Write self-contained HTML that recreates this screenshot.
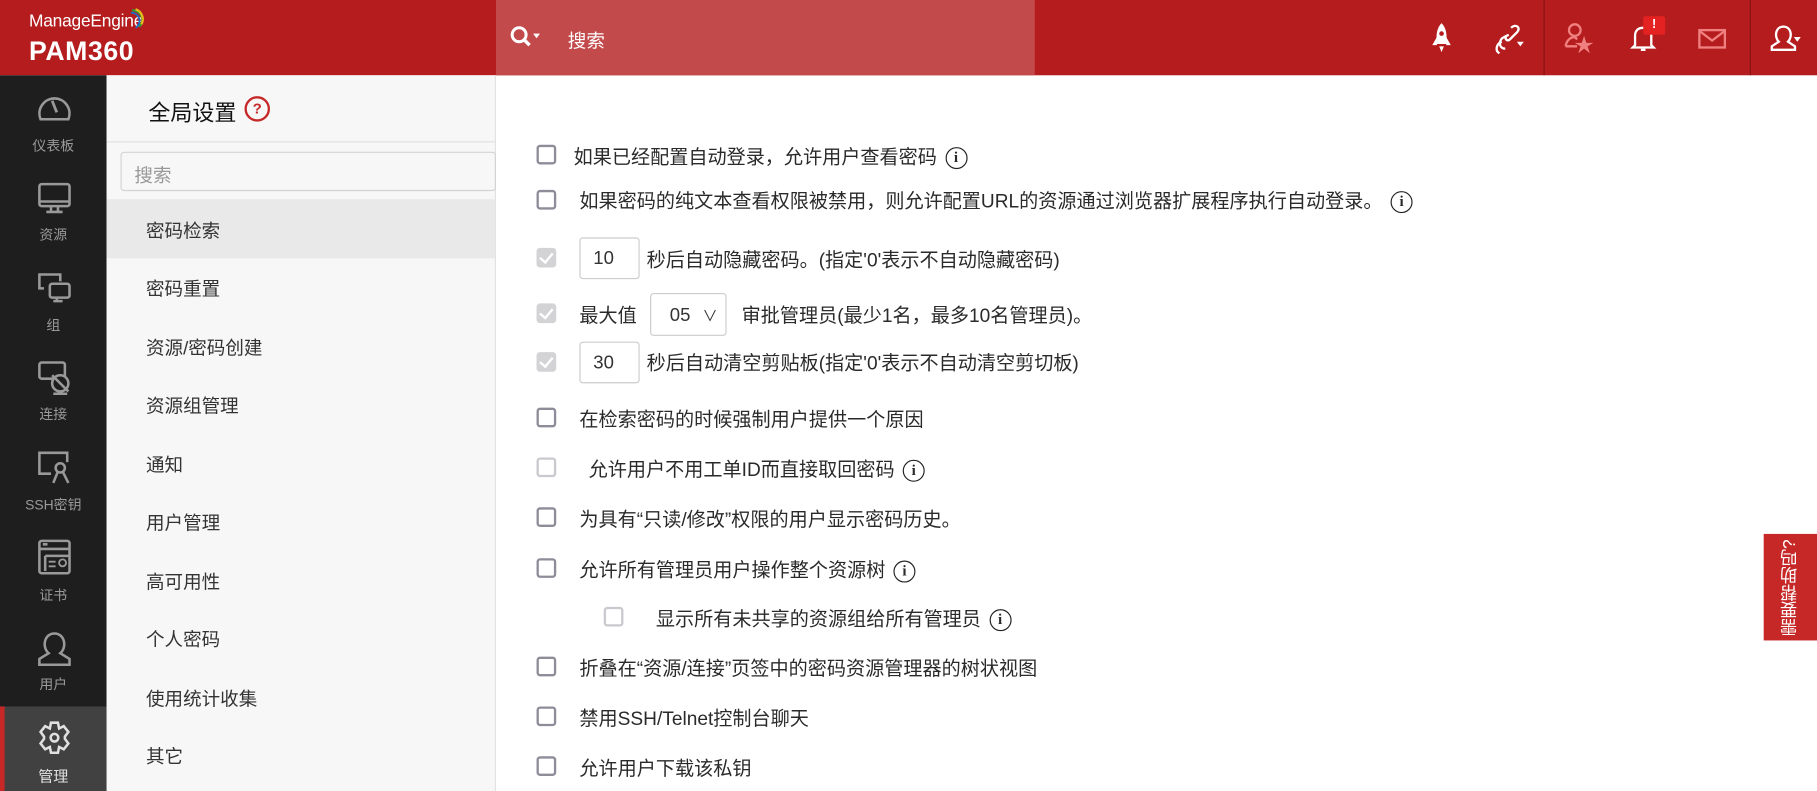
<!DOCTYPE html>
<html><head><meta charset="utf-8"><style>
*{margin:0;padding:0;box-sizing:border-box}
html,body{width:1817px;height:791px;overflow:hidden;background:#fff}
body{font-family:"Liberation Sans","Noto Sans CJK SC",sans-serif}
#w{position:absolute;left:0;top:0;width:1568px;height:683px;transform:scale(1.15880,1.15813);transform-origin:0 0}
.a{position:absolute}
.hdr{left:0;top:0;width:1568px;height:65px;background:#b41c1e}
.srch{left:428px;top:0;width:465px;height:65px;background:#c34a4b}
.sb{left:0;top:65px;width:92px;height:618px;background:#1e1e1e}
.si{position:absolute;left:0;width:92px;text-align:center;color:#9a9a9a;font-size:12px}
.p2{left:92px;top:65px;width:336px;height:618px;background:#f7f7f7;border-right:1px solid #e2e2e2}
.mi{position:absolute;left:34px;font-size:16px;color:#333}
.cb{position:absolute;left:463px;width:17px;height:17px;border:2px solid #8e8c99;border-radius:3px;background:#fff}
.cb.d{border-color:#c9c9cf}
.cb.c{border:none;background:#d3d3d6}
.cb.c:after{content:"";position:absolute;left:5px;top:2px;width:5px;height:9px;border:solid #fff;border-width:0 2px 2px 0;transform:rotate(40deg)}
.t{position:absolute;font-size:16.5px;color:#2a2a2a;white-space:nowrap}
.inp{position:absolute;left:500px;width:52px;height:36px;border:1px solid #ccc;border-radius:3px;font-size:16px;color:#333;padding:9px 0 0 11px;background:#fff}
.info{display:inline-block;width:19px;height:19px;border:1.6px solid #222;border-radius:50%;font-size:13px;font-weight:bold;text-align:center;line-height:16px;vertical-align:1px;margin-left:7px;font-family:"Liberation Serif",serif}
</style></head><body><div id="w">
<div class="a hdr"></div>
<div class="a" style="left:25px;top:10px;color:#fff;font-size:15px;letter-spacing:-0.2px">ManageEngine</div>
<svg class="a" style="left:112px;top:7px" width="14" height="18"><path d="M2 2 A8 8 0 0 1 8 16" stroke="#2a9d3a" stroke-width="2" fill="none"/><path d="M5 1 A9 9 0 0 1 10 14" stroke="#e8b81a" stroke-width="2" fill="none"/><path d="M1 4 A7 7 0 0 1 5 17" stroke="#1d6ec9" stroke-width="1.5" fill="none"/></svg>
<div class="a" style="left:25px;top:31px;color:#fff;font-size:23px;font-weight:bold;letter-spacing:0.5px">PAM360</div>
<div class="a srch"></div>
<svg class="a" style="left:440px;top:22px" width="28" height="22"><circle cx="8" cy="8" r="6" stroke="#fff" stroke-width="2.6" fill="none"/><path d="M12 12 L17 17" stroke="#fff" stroke-width="3"/><path d="M20 7 L26 7 L23 11Z" fill="#fff"/></svg>
<div class="a" style="left:490px;top:22px;color:#fff;font-size:16px">搜索</div>
<svg class="a" style="left:1234px;top:18px" width="20" height="30"><path d="M10 2 C14 6 15 12 14 20 L6 20 C5 12 6 6 10 2Z" fill="#fff"/><path d="M6 14 L2 21 L6 21Z M14 14 L18 21 L14 21Z" fill="#fff"/><circle cx="10" cy="11" r="2" fill="#b41c1e"/><path d="M8 22 L12 22 L10 27Z" fill="#fff"/></svg>
<svg class="a" style="left:1288px;top:18px" width="30" height="30"><path d="M11 24 C5 24 5 16 10 14 L14 12 M16 6 C20 2 25 6 21 10 L15 16 C13 18 10 16 12 13" stroke="#fff" stroke-width="2" fill="none"/><path d="M6 28 C2 26 3 20 8 18" stroke="#fff" stroke-width="2" fill="none"/><path d="M21 18 L27 18 L24 22Z" fill="#fff"/></svg>
<div class="a" style="left:1332px;top:0;width:1px;height:65px;background:#8a1214"></div>
<svg class="a" style="left:1348px;top:18px" width="30" height="30"><circle cx="11" cy="8" r="5" stroke="#f08080" stroke-width="2" fill="none"/><path d="M3 22 C4 16 8 14 11 14 L13 16" stroke="#f08080" stroke-width="2" fill="none"/><path d="M3 22 L13 22" stroke="#f08080" stroke-width="2"/><path d="M19 13 L21 19 L27 19 L22 22 L24 28 L19 24 L14 28 L16 22 L11 19 L17 19Z" fill="#f08080"/></svg>
<svg class="a" style="left:1406px;top:18px" width="26" height="30"><path d="M5 21 L5 13 C5 8 8 6 12 6 C16 6 19 8 19 13 L19 21 L21 23 L3 23Z" stroke="#fff" stroke-width="2" fill="none"/><path d="M10 25 L14 25" stroke="#fff" stroke-width="2"/></svg>
<div class="a" style="left:1418px;top:14px;width:19px;height:16px;background:#e52222;border-radius:2px;color:#fff;font-size:11px;font-weight:bold;text-align:center;line-height:14px">!</div>
<svg class="a" style="left:1465px;top:24px" width="26" height="20"><rect x="1.5" y="2" width="22" height="15" stroke="#f08080" stroke-width="2" fill="none"/><path d="M2 3 L12.5 11 L23 3" stroke="#f08080" stroke-width="2" fill="none"/></svg>
<div class="a" style="left:1510px;top:0;width:1px;height:65px;background:#8a1214"></div>
<svg class="a" style="left:1527px;top:20px" width="30" height="28"><path d="M8 16 C4 12 5 3 12 3 C19 3 20 12 16 16 L22 20 L22 23 L2 23 L2 20Z" stroke="#fff" stroke-width="2" fill="none"/><path d="M21 12 L27 12 L24 16Z" fill="#fff"/></svg>
<div class="a sb"></div>
<div class="a" style="left:0;top:610px;width:92px;height:73px;background:#414141"></div>
<div class="a" style="left:0;top:610px;width:4px;height:73px;background:#c62828"></div>
<svg class="a" style="left:32px;top:80px" width="30" height="26"><path d="M3 23 A13 13 0 1 1 27 23Z" stroke="#999" stroke-width="2.2" fill="none"/><path d="M13 7 L17 17" stroke="#999" stroke-width="2.4"/></svg>
<div class="si" style="top:117px">仪表板</div>
<svg class="a" style="left:32px;top:157px" width="30" height="30"><rect x="2" y="2" width="26" height="19" rx="2" stroke="#999" stroke-width="2.2" fill="none"/><path d="M2 17 L28 17 M12 21 L12 25 M18 21 L18 25 M8 26 L22 26" stroke="#999" stroke-width="2.2"/></svg>
<div class="si" style="top:194px">资源</div>
<svg class="a" style="left:32px;top:235px" width="30" height="30"><path d="M6 14 L2 14 L2 2 L20 2 L20 8" stroke="#999" stroke-width="2.2" fill="none"/><rect x="11" y="10" width="17" height="12" rx="2" stroke="#999" stroke-width="2.2" fill="none"/><path d="M17 22 L17 25 M22 25 L14 25" stroke="#999" stroke-width="2.2"/></svg>
<div class="si" style="top:272px">组</div>
<svg class="a" style="left:32px;top:311px" width="30" height="32"><rect x="2" y="2" width="22" height="14" rx="2" stroke="#999" stroke-width="2.2" fill="none"/><circle cx="20" cy="20" r="7" stroke="#999" stroke-width="2.2" fill="#1e1e1e"/><path d="M13 13 L27 27 M14 29 L26 29" stroke="#999" stroke-width="2.2"/></svg>
<div class="si" style="top:349px">连接</div>
<svg class="a" style="left:32px;top:389px" width="30" height="32"><path d="M12 20 L2 20 L2 2 L26 2 L26 10" stroke="#999" stroke-width="2.2" fill="none"/><circle cx="20" cy="15" r="4" stroke="#999" stroke-width="2.2" fill="none"/><path d="M18 18 L14 28 M22 18 L27 28" stroke="#999" stroke-width="2.2"/></svg>
<div class="si" style="top:427px">SSH密钥</div>
<svg class="a" style="left:32px;top:465px" width="30" height="34"><rect x="2" y="2" width="26" height="28" rx="2" stroke="#999" stroke-width="2.2" fill="none"/><path d="M2 9 L28 9 M5 5 L9 5 M7 15 L28 15 M7 15 L7 28" stroke="#999" stroke-width="2.2"/><path d="M10 20 L16 20 M10 24 L16 24" stroke="#999" stroke-width="1.6"/><circle cx="22" cy="21" r="3" stroke="#999" stroke-width="1.6" fill="none"/></svg>
<div class="si" style="top:505px">证书</div>
<svg class="a" style="left:32px;top:545px" width="30" height="32"><path d="M10 19 C4 14 6 2 15 2 C24 2 26 14 20 19 L28 24 L28 29 L2 29 L2 24Z" stroke="#999" stroke-width="2.2" fill="none"/></svg>
<div class="si" style="top:582px">用户</div>
<svg class="a" style="left:33px;top:622px" width="28" height="30"><g transform="translate(14,15)" stroke="#e0e0e0" stroke-width="2.2" fill="none"><circle r="3.3"/><path d="M-3 -13 L3 -13 L4 -8 L8 -10 L12 -5 L9 -1 L9 1 L12 5 L8 10 L4 8 L3 13 L-3 13 L-4 8 L-8 10 L-12 5 L-9 1 L-9 -1 L-12 -5 L-8 -10 L-4 -8Z"/></g></svg>
<div class="si" style="top:660px;color:#e0e0e0;font-size:13px">管理</div>
<div class="a p2"></div>
<div class="a" style="left:128px;top:83px;font-size:19px;color:#111">全局设置</div>
<div class="a" style="left:211px;top:83px;width:22px;height:22px;border:2px solid #c62828;border-radius:50%;color:#c62828;font-size:13px;font-weight:bold;text-align:center;line-height:18px">?</div>
<div class="a" style="left:92px;top:122px;width:336px;height:1px;background:#e0e0e0"></div>
<div class="a" style="left:104px;top:131px;width:324px;height:34px;border:1px solid #d3d3d3;border-radius:3px;background:#f7f7f7;color:#999;font-size:16px;padding:6px 0 0 11px">搜索</div>
<div class="a" style="left:92px;top:172px;width:335px;height:51px;background:#e9e9e9"></div>
<div class="a" style="left:92px;top:0;width:336px;height:683px">
<div class="mi" style="top:186px">密码检索</div>
<div class="mi" style="top:236px">密码重置</div>
<div class="mi" style="top:287px">资源/密码创建</div>
<div class="mi" style="top:337px">资源组管理</div>
<div class="mi" style="top:388px">通知</div>
<div class="mi" style="top:438px">用户管理</div>
<div class="mi" style="top:489px">高可用性</div>
<div class="mi" style="top:539px">个人密码</div>
<div class="mi" style="top:590px">使用统计收集</div>
<div class="mi" style="top:640px">其它</div>
</div>
<div class="cb" style="top:125px"></div><div class="t" style="left:495px;top:122px">如果已经配置自动登录，允许用户查看密码<span class="info">i</span></div>
<div class="cb" style="top:164px"></div><div class="t" style="left:500px;top:160px">如果密码的纯文本查看权限被禁用，则允许配置URL的资源通过浏览器扩展程序执行自动登录。<span class="info">i</span></div>
<div class="cb c" style="top:214px"></div><div class="inp" style="top:205px">10</div><div class="t" style="left:558px;top:211px">秒后自动隐藏密码。(指定'0'表示不自动隐藏密码)</div>
<div class="cb c" style="top:262px"></div><div class="t" style="left:500px;top:259px">最大值</div>
<div class="a" style="left:561px;top:253px;width:66px;height:37px;border:1px solid #ccc;border-radius:3px;background:#fff;font-size:16px;color:#333;padding:8px 0 0 16px">05 <span style="font-size:13px;margin-left:6px">&#8744;</span></div>
<div class="t" style="left:640px;top:259px">审批管理员(最少1名，最多10名管理员)。</div>
<div class="cb c" style="top:304px"></div><div class="inp" style="top:295px">30</div><div class="t" style="left:558px;top:300px">秒后自动清空剪贴板(指定'0'表示不自动清空剪切板)</div>
<div class="cb" style="top:352px"></div><div class="t" style="left:500px;top:349px">在检索密码的时候强制用户提供一个原因</div>
<div class="cb d" style="top:395px"></div><div class="t" style="left:508px;top:392px">允许用户不用工单ID而直接取回密码<span class="info">i</span></div>
<div class="cb" style="top:438px"></div><div class="t" style="left:500px;top:435px">为具有“只读/修改”权限的用户显示密码历史。</div>
<div class="cb" style="top:482px"></div><div class="t" style="left:500px;top:479px">允许所有管理员用户操作整个资源树<span class="info">i</span></div>
<div class="cb d" style="top:524px;left:521px"></div><div class="t" style="left:566px;top:521px">显示所有未共享的资源组给所有管理员<span class="info">i</span></div>
<div class="cb" style="top:567px"></div><div class="t" style="left:500px;top:564px">折叠在“资源/连接”页签中的密码资源管理器的树状视图</div>
<div class="cb" style="top:610px"></div><div class="t" style="left:500px;top:607px">禁用SSH/Telnet控制台聊天</div>
<div class="cb" style="top:653px"></div><div class="t" style="left:500px;top:650px">允许用户下载该私钥</div>
<div class="a" style="left:1522px;top:461px;width:46px;height:92px;background:#c62828"></div>
<div class="a" style="left:1534px;top:463px;width:22px;height:88px;color:#fff;font-size:15px;writing-mode:vertical-rl;transform:rotate(180deg);text-align:center;line-height:22px;white-space:nowrap">需要帮助吗?</div>
</div></body></html>
